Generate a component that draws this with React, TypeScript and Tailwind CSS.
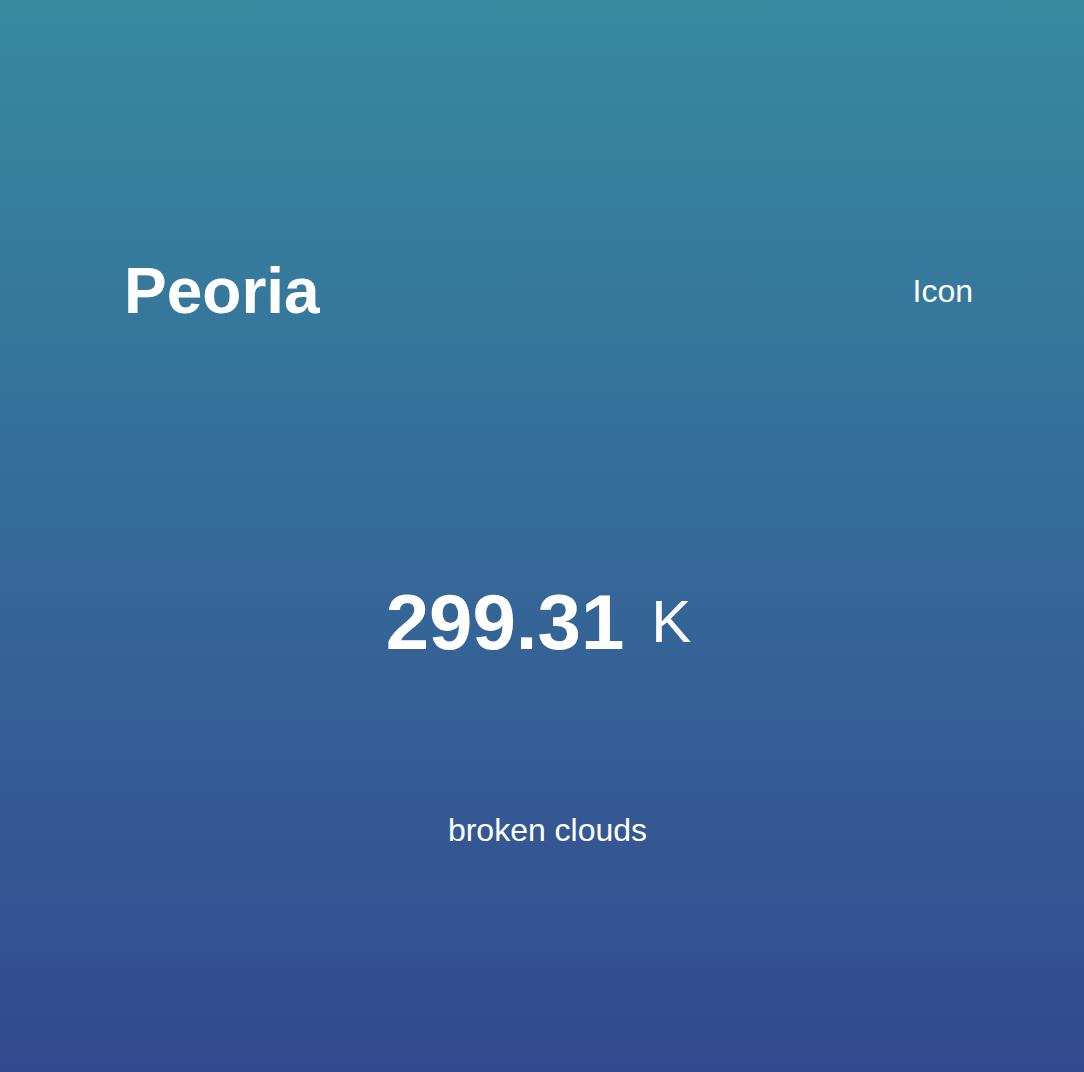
import React from "react";

const weather = {
  city: "Peoria",
  temp: "299.31",
  unit: "K",
  description: "broken clouds",
};

const App = () => {
  return (
    <div
      className="min-h-screen w-full bg-gradient-to-b from-[#368aa0] to-[#33498f] text-white"
      style={{ fontFamily: '"Liberation Sans", Arial, sans-serif' }}
    >
      <div className="flex flex-col pl-[124px] pr-[111px]">
        <div className="flex items-center justify-between pt-[259px]">
          <h1 className="text-[64px] font-bold leading-none">{weather.city}</h1>
          <span className="text-[32px] leading-none">Icon</span>
        </div>

        <div className="mt-[260px] flex items-center justify-center gap-[27px] pr-[20px]">
          <span className="text-[78px] font-bold leading-none">{weather.temp}</span>
          <span className="text-[60px] leading-none">{weather.unit}</span>
        </div>

        <p className="mt-[153px] pr-[2px] text-center text-[32px] leading-none">
          {weather.description}
        </p>
      </div>
    </div>
  );
};

export default App;
